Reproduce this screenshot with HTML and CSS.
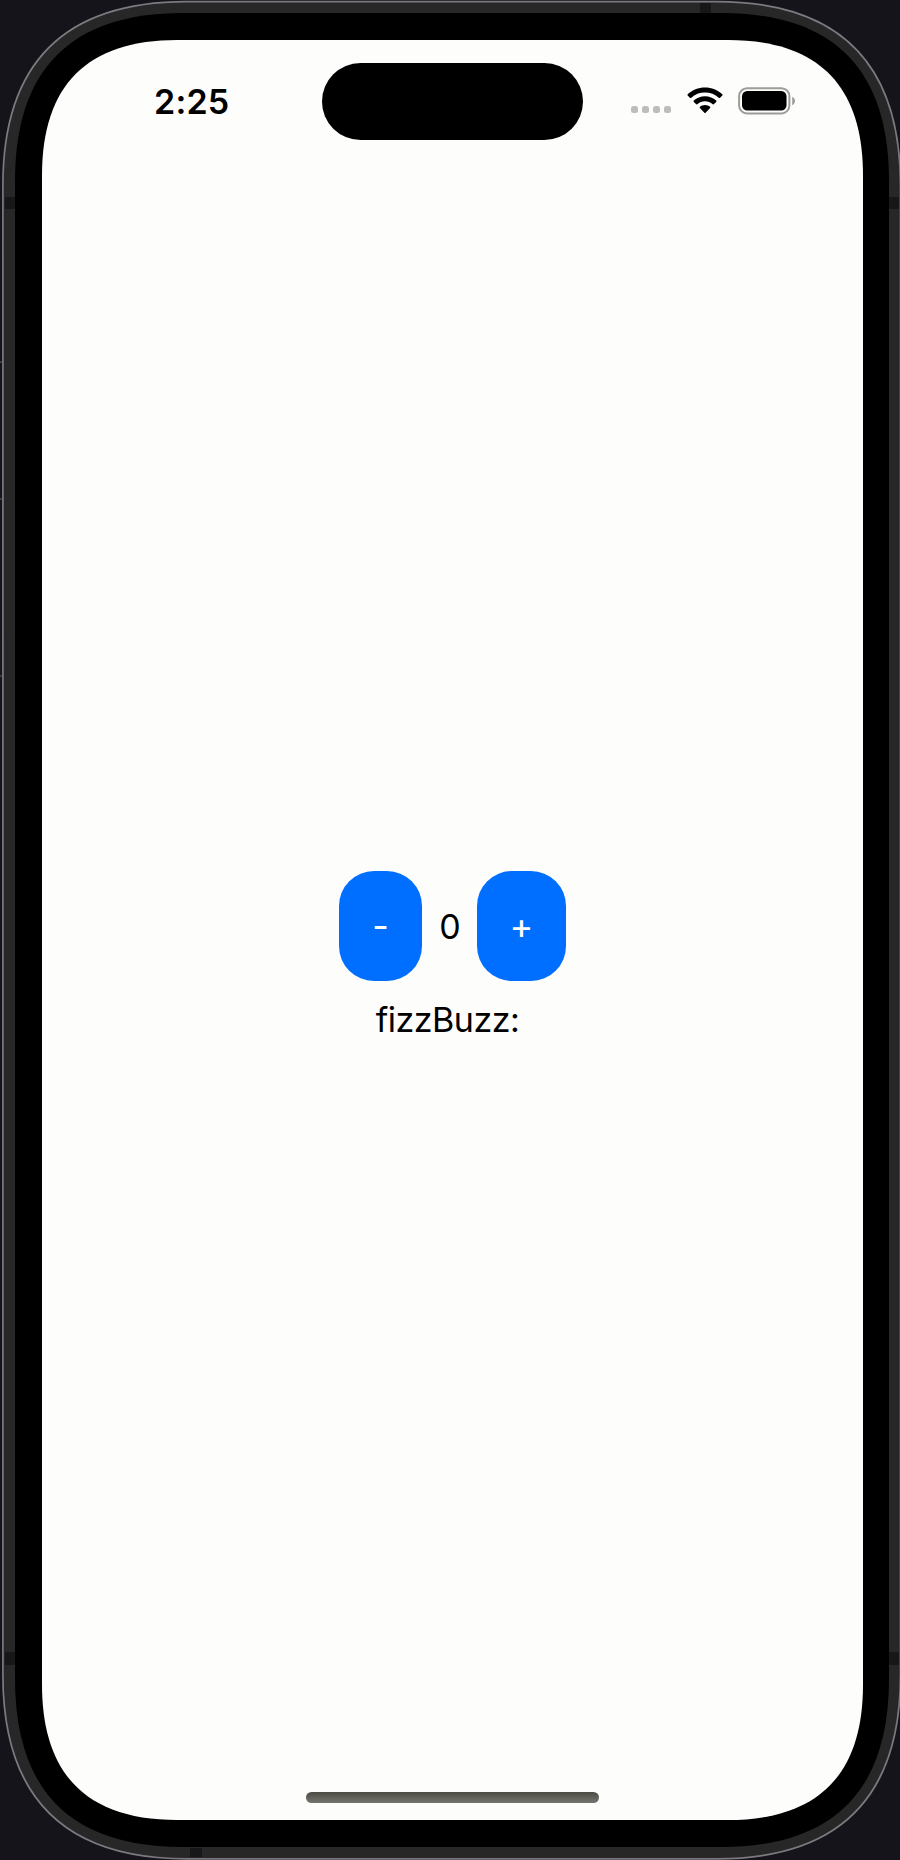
FILE: index.html
```html
<!DOCTYPE html>
<html lang="en">
<head>
<meta charset="utf-8">
<title>fizzBuzz</title>
<link rel="stylesheet" href="styles.css">
</head>
<body>
<div class="device">
  <svg class="shell" width="900" height="1860" viewBox="0 0 900 1860" aria-hidden="true">
    <path class="shell-rim" data-box="2.9 1.7 897.6 1857.1 152"/>
    <g class="antenna">
      <rect x="5" y="197" width="10" height="12"/>
      <rect x="889" y="197" width="10" height="12"/>
      <rect x="700" y="3" width="11" height="10"/>
      <rect x="5" y="1652" width="10" height="13"/>
      <rect x="889" y="1652" width="10" height="13"/>
      <rect x="190" y="1848" width="12" height="9"/>
      <rect x="0" y="636" width="2" height="40"/>
    </g>
    <path class="shell-buttons" d="M0 362h2M0 499h2M0 676h2"/>
    <path class="shell-bezel" data-box="15 13 874 1834 139"/>
    <path class="shell-screen" data-box="42 40 821 1780 112"/>
  </svg>
  <main class="screen">
    <header class="status">
      <div class="time">2:25</div>
      <div class="island"></div>
      <div class="indicators">
        <div class="signal"><i></i><i></i><i></i><i></i></div>
        <svg class="wifi" width="36" height="27" viewBox="0 0 36 27">
          <path d="M18 .5C11.300.5 5.200 3.100.7 7.300c-.4.400-.4 1 0 1.300l2.200 2.200c.4.400 1 .4 1.400 0C7.900 7.400 12.700 5.500 18 5.500s10.100 1.900 13.700 5.300c.4.400 1 .4 1.400 0l2.200-2.200c.4-.3.4-.9 0-1.300C30.800 3.100 24.700.5 18 .5z"/>
          <path d="M18 9.300c-4.300 0-8.200 1.600-11.200 4.300-.4.300-.4.900 0 1.300L9 17.100c.4.400.9.400 1.300.1 2.100-1.800 4.800-2.900 7.700-2.900s5.600 1.100 7.700 2.900c.4.300.9.300 1.300-.1l2.200-2.200c.4-.4.4-1 0-1.300-3-2.700-6.900-4.300-11.200-4.300z"/>
          <path d="M18 18c-2 0-3.700.7-5.100 1.800-.4.300-.4.900 0 1.200l4.500 4.700c.3.400.9.400 1.200 0l4.500-4.700c.4-.3.4-.9 0-1.200C21.700 18.700 20 18 18 18z"/>
        </svg>
        <svg class="battery" width="58" height="28" viewBox="0 0 58 28">
          <rect class="battery-case" x="1.100" y="1.200" width="50.300" height="25.300" rx="8"/>
          <rect x="4" y="4" width="44.500" height="19.500" rx="5.200"/>
          <path class="battery-tip" d="M54.200 9.800c1.700.8 2.800 2.300 2.800 4.200s-1.100 3.400-2.800 4.200z"/>
        </svg>
      </div>
    </header>
    <section class="counter">
      <div class="stepper">
        <button class="step step-minus">-</button>
        <output class="value">0</output>
        <button class="step step-plus">+</button>
      </div>
      <p class="result">fizzBuzz:</p>
    </section>
    <div class="home"></div>
  </main>
</div>
<script src="shell.js"></script>
</body>
</html>
```
FILE: styles.css
```css
* { box-sizing: border-box; }
body {
  margin: 0;
  background: #15141a;
  color: #000;
  font-family: Inter, "Liberation Sans", sans-serif;
}
.device {
  display: grid;
  width: 900px;
  height: 1860px;
  overflow: hidden;
}
.shell, .screen { grid-area: 1 / 1; }
.shell { display: block; }
.shell-rim { fill: #272727; stroke: #7b7a80; stroke-width: 1.7; }
.antenna { fill: #17171a; }
.shell-buttons { stroke: #4a4a44; stroke-width: 1.5; }
.shell-bezel { fill: #000; }
.shell-screen { fill: #fdfdfb; }
.screen {
  display: flex;
  flex-direction: column;
  align-items: center;
  width: 821px;
  height: 1780px;
  margin: 40px 0 0 42px;
}
.status {
  display: grid;
  grid-template-columns: 280px 261px 280px;
  align-items: center;
  width: 100%;
  height: 77px;
  margin-top: 23.400px;
}
.time {
  padding-left: 112px;
  font-size: 34px;
  font-weight: 600;
  line-height: 40px;
  letter-spacing: 0.2px;
}
.island {
  height: 77px;
  border-radius: 39px;
  background: #000;
}
.indicators {
  display: flex;
  align-items: center;
  padding-left: 48px;
  padding-bottom: 1.800px;
}
.signal {
  display: flex;
  gap: 4px;
  padding-top: 18px;
}
.signal i {
  width: 7px;
  height: 7px;
  border-radius: 2.500px;
  background: #bdbdbd;
}
.wifi { margin-left: 15.500px; }
.battery { margin-left: 15px; }
.battery-case { fill: none; stroke: #9c9c98; stroke-width: 2; }
.battery-tip { fill: #9c9c98; }
.counter {
  display: flex;
  flex-direction: column;
  align-items: center;
  margin-top: 730.600px;
}
.stepper { display: flex; align-items: center; }
.step {
  height: 110px;
  padding: 1px 0 0;
  border: 0;
  border-radius: 35px;
  background: #006fff;
  color: #fff;
  font: 400 36px/40px Inter, sans-serif;
}
.step-minus { width: 83px; }
.step-plus { width: 89px; }
.value {
  width: 55px;
  padding: 2px 0 0 1px;
  text-align: center;
  font-size: 34px;
  line-height: 40px;
}
.result {
  margin: 19px 10px 0 0;
  font-size: 34px;
  line-height: 40px;
  letter-spacing: -0.5px;
}
.home {
  width: 293px;
  height: 11px;
  margin-top: auto;
  margin-bottom: 17px;
  border-radius: 6px;
  background: linear-gradient(#4c4b43, #77766e);
}
```
FILE: shell.js
```js
// Builds a rounded rectangle whose corners ease gradually into the sides.
function smoothRect(x, y, w, h, r) {
  const corner = [[1.21, 0], [0.402, 0], [0, 0.402], [0, 1.21]];
  const reversed = corner.slice().reverse();
  const place = (points, right, bottom) => points.map(([a, b]) => [
    right ? x + w - a * r : x + a * r,
    bottom ? y + h - b * r : y + b * r
  ].map(n => n.toFixed(2)).join(" "));
  const parts = [
    place(corner, true, false),
    place(reversed, true, true),
    place(corner, false, true),
    place(reversed, false, false)
  ];
  return parts.map((p, i) => (i ? "L" : "M") + p[0] + "C" + p.slice(1).join(" ")).join("") + "Z";
}

document.querySelectorAll("[data-box]").forEach(path => {
  path.setAttribute("d", smoothRect(...path.dataset.box.split(" ").map(Number)));
});
```
